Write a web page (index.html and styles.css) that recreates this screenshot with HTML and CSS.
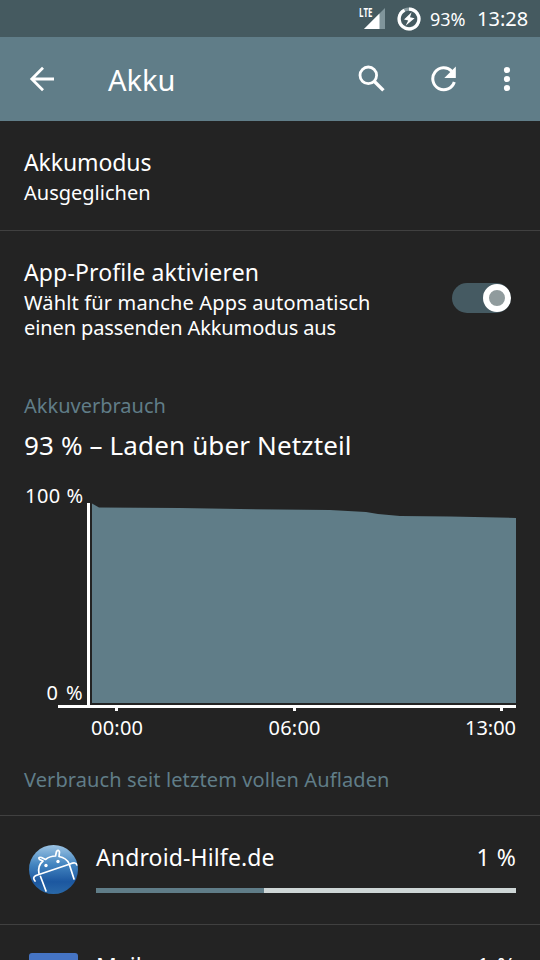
FILE: index.html
```html
<!DOCTYPE html>
<html lang="de">
<head>
<meta charset="utf-8">
<title>Akku</title>
<link rel="stylesheet" href="styles.css">
</head>
<body>
<div class="screen">
  <div class="status">
    <svg class="signal" width="28" height="24" viewBox="0 0 28 24">
      <path d="M26 1V22H5Z" fill="#80959b"/>
      <path d="M20.5 6.5V22H5Z" fill="#fff"/>
      <path d="M0 0H14.5V11.5H0Z" fill="#455a60"/>
      <text x="0" y="10" textLength="13.5" lengthAdjust="spacingAndGlyphs" class="lte">LTE</text>
    </svg>
    <svg class="charge" width="24" height="24" viewBox="0 0 24 24">
      <circle cx="12" cy="12" r="9.9" fill="none" stroke="#8b9da2" stroke-width="3.2"/>
      <path d="M12 2.1A9.9 9.9 0 1 1 7.5 3.2" fill="none" stroke="#fff" stroke-width="3.2"/>
      <path d="M14.6 5.2 7 12.4l4.2 1.2-2.6 5.2 9-7.5-4.6-1.1z" fill="#fff"/>
    </svg>
    <span class="percent">93%</span>
    <span class="clock">13:28</span>
  </div>
  <header class="toolbar">
    <svg class="back" width="26" height="26" viewBox="0 0 26 26" fill="none" stroke="#fff" stroke-width="2.8"><path d="M25 13H3M14 1.8 2.8 13 14 24.2"/></svg>
    <h1>Akku</h1>
    <svg class="search" width="28" height="28" viewBox="0 0 28 28" fill="none" stroke="#fff"><circle cx="10.3" cy="10.3" r="8.3" stroke-width="2.8"/><path d="m16.2 16.2 9.2 9.2" stroke-width="3.4"/></svg>
    <svg class="refresh" width="26" height="26" viewBox="0 0 26 26"><path d="M20.8 5.2A11 11 0 1 0 23.3 16" fill="none" stroke="#fff" stroke-width="3"/><path d="M24.8 0.5V12H13.3Z" fill="#fff"/></svg>
    <svg class="more" width="8" height="26" viewBox="0 0 8 26" fill="#fff"><circle cx="4" cy="4" r="3.1"/><circle cx="4" cy="13" r="3.1"/><circle cx="4" cy="22" r="3.1"/></svg>
  </header>
  <main>
    <section class="pref mode">
      <div class="name akkumodus">Akkumodus</div>
      <div class="sub">Ausgeglichen</div>
    </section>
    <section class="pref profiles">
      <div>
        <div class="name appprofile">App-Profile aktivieren</div>
        <div class="sub"><span class="wide">Wählt für manche Apps automatisch</span><br><span class="tight">einen passenden Akkumodus aus</span></div>
      </div>
      <div class="switch"><div class="thumb"></div></div>
    </section>
    <h2 class="category">Akkuverbrauch</h2>
    <div class="summary">93 % – Laden über Netzteil</div>
    <svg class="chart" width="540" height="270" viewBox="0 480 540 270">
      <path d="M92 503.5 99 507.5 180 508 240 509 330 510 366 512 378 514 400 516 450 516.5 516 518V703H92Z" fill="#607d88"/>
      <path d="M87 503h3v202h-3zM58 705h458v3H58zM115 708h3v3h-3zM293 708h3v3h-3zM500 708h3v3h-3z" fill="#fff"/>
      <text x="25" y="503" textLength="58">100 %</text>
      <text x="46.5" y="700" textLength="36">0 %</text>
      <text x="91" y="735" textLength="52">00:00</text>
      <text x="268.5" y="735" textLength="52">06:00</text>
      <text x="465" y="735" textLength="51">13:00</text>
    </svg>
    <h2 class="category since">Verbrauch seit letztem vollen Aufladen</h2>
    <section class="app">
      <svg class="app-icon" width="50" height="50" viewBox="0 0 50 50">
        <defs>
          <linearGradient id="sphere" x2="0" y2="1"><stop stop-color="#9cc4e4"/><stop offset=".4" stop-color="#4385c0"/><stop offset=".75" stop-color="#1c57a0"/><stop offset="1" stop-color="#2a69a8"/></linearGradient>
          <clipPath id="disc"><circle cx="25.5" cy="24.5" r="24.5"/></clipPath>
        </defs>
        <circle cx="25.5" cy="24.5" r="24.5" fill="url(#sphere)"/>
        <g clip-path="url(#disc)" fill="none" stroke="#fff" stroke-width="1.7" stroke-linecap="round" stroke-linejoin="round">
          <path d="M11 28.5Q9.5 20.5 15 16L11.5 14.5Q9.5 11.5 13.5 12.5L17.500 14.500Q22 11 27.500 11L28.500 6.500Q30.500 4 31.500 7L31 11.500Q38.500 13 41 18.500"/>
          <path d="M7 36Q4 32.500 8 30.500L42 19Q48 16.500 49 20M12.500 31.500 18 46M41.500 20 46 34"/>
          <g fill="#fff" stroke="none"><circle cx="18" cy="20.500" r="1.700"/><circle cx="30" cy="16.500" r="1.700"/></g>
        </g>
      </svg>
      <div class="usage">
        <div class="line"><span class="name hilfe">Android-Hilfe.de</span><span class="name one">1 %</span></div>
        <div class="bar"><div class="fill"></div></div>
      </div>
    </section>
    <section class="app mail">
      <div class="mail-icon"></div>
      <div class="usage">
        <div class="line"><span class="name">Mail</span><span class="name one">1 %</span></div>
      </div>
    </section>
  </main>
</div>
</body>
</html>
```

FILE: styles.css
```css
* { box-sizing: border-box; }
body { margin: 0; background: #232323; color: #fff; font-family: "Noto Sans", sans-serif; }
.screen { width: 540px; height: 960px; overflow: hidden; display: flex; flex-direction: column; }
.screen svg { flex: none; display: block; }
h1, h2 { margin: 0; font-weight: 400; }

.status { height: 37px; flex: none; background: #455a60; display: flex; align-items: center; padding-left: 359px; white-space: nowrap; }
.signal { margin-top: 1px; }
.lte { font: 700 12.5px "Open Sans", sans-serif; fill: #fff; }
.charge { margin-left: 10px; }
.percent { font-size: 18px; margin-left: 9px; width: 47px; }
.clock { font-size: 20px; }

.toolbar { height: 84px; flex: none; background: #607d88; display: flex; align-items: center; padding-left: 29px; }
.toolbar h1 { font-size: 29px; line-height: 40px; width: 250px; margin: 2px 0 0 53px; }
.refresh { margin-left: 45px; }
.more { margin-left: 46px; }

main { flex: none; }
.pref { padding: 0 24px; white-space: nowrap; }
.name { font-size: 23px; line-height: 30px; }
.akkumodus { letter-spacing: -0.1px; }
.appprofile { letter-spacing: 0.13px; }
.hilfe { letter-spacing: 0.13px; }
.one { letter-spacing: 0.6px; margin-right: -0.6px; }
.sub { font-size: 20px; line-height: 25px; }
.wide { letter-spacing: 0.15px; }
.tight { letter-spacing: -0.1px; }
.mode { height: 110px; padding-top: 26px; border-bottom: 1px solid #404040; }
.mode .sub { margin-top: 3px; }
.profiles { height: 146px; padding-top: 26px; display: flex; justify-content: space-between; }
.profiles .sub { margin-top: 3px; }
.switch { width: 59px; height: 30px; margin: 26px 5px 0 0; border-radius: 15px; background: #455a62; display: flex; justify-content: flex-end; align-items: center; }
.thumb { width: 28px; height: 28px; border: 6px solid #fff; border-radius: 50%; background: #909b9d; }

.category { height: 54px; padding: 14px 24px 0; font-size: 20px; line-height: 30px; color: #607d88; white-space: nowrap; }
.summary { height: 49px; padding-left: 24px; font-size: 26px; line-height: 28px; letter-spacing: 0.14px; white-space: nowrap; }
.chart text { font-size: 20px; fill: #fff; }
.since { height: 66px; padding-top: 15px; letter-spacing: 0.1px; border-bottom: 1px solid #404040; }

.app { height: 109px; padding: 26px 24px 0 28px; display: flex; border-bottom: 1px solid #404040; }
.app-icon { margin-top: 3px; }
.usage { flex: 1; margin-left: 18px; }
.line { display: flex; justify-content: space-between; }
.bar { height: 5px; margin-top: 16px; background: #ced6d6; }
.fill { width: 40%; height: 100%; background: #607d88; }
.mail-icon { width: 49px; height: 50px; margin: 2px 0 0 1px; border-radius: 3px; background: #4574c4; }
```
